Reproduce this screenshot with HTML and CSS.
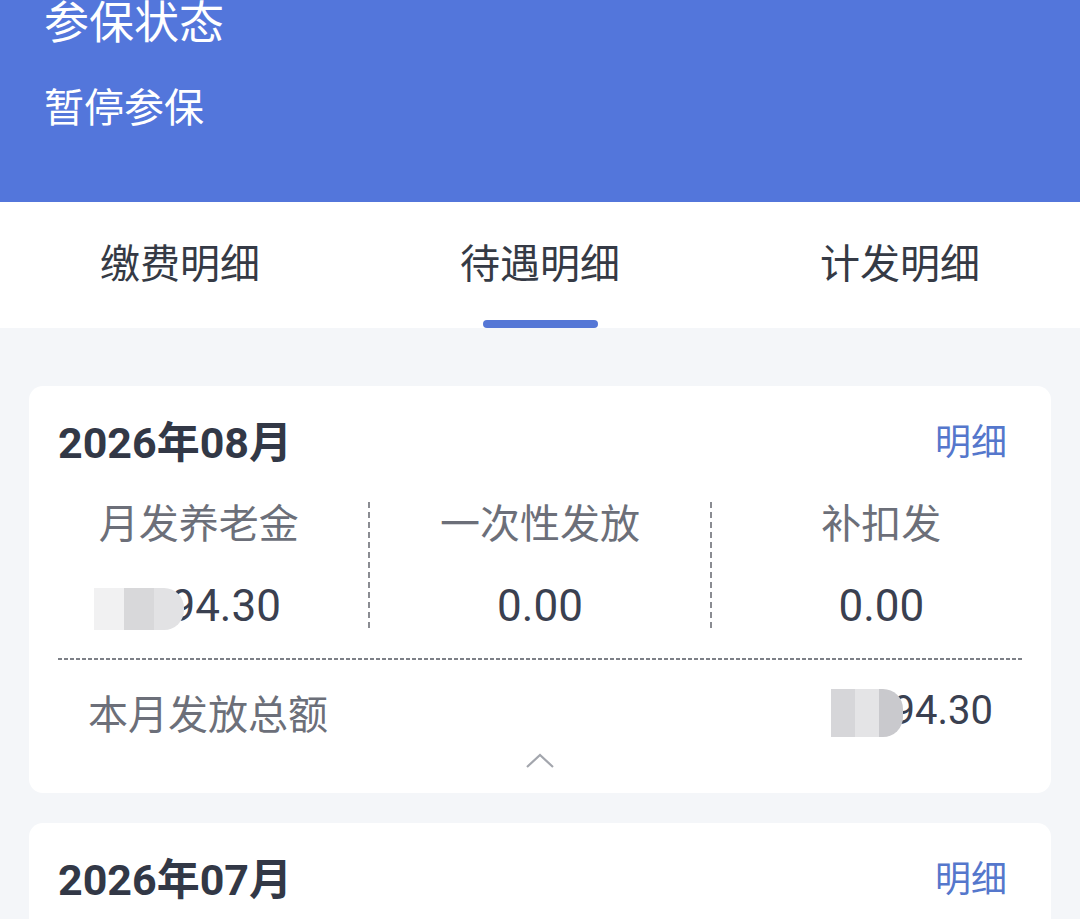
FILE: index.html
```html
<!DOCTYPE html>
<html lang="zh-CN">
<head>
    <meta charset="UTF-8">
    <meta name="viewport" content="width=device-width, initial-scale=1.0">
    <title>待遇明细</title>
    <link rel="stylesheet" href="styles.css">
</head>
<body>
    <div class="header">
        <div class="header-title">参保状态</div>
        <div class="header-status">暂停参保</div>
    </div>

    <div class="tabs">
        <div class="tab">缴费明细</div>
        <div class="tab active">待遇明细</div>
        <div class="tab">计发明细</div>
    </div>

    <div class="list">
        <div class="card">
            <div class="card-head">
                <span class="month">2026年08月</span>
                <a class="more">明细</a>
            </div>
            <div class="cols">
                <div class="col">
                    <div class="label">月发养老金</div>
                    <div class="value"><span class="mosaic m1"><i></i><i></i><i></i></span>94.30</div>
                </div>
                <div class="col">
                    <div class="label">一次性发放</div>
                    <div class="value">0.00</div>
                </div>
                <div class="col">
                    <div class="label">补扣发</div>
                    <div class="value">0.00</div>
                </div>
            </div>
            <div class="dash"></div>
            <div class="total">
                <span class="total-label">本月发放总额</span>
                <span class="total-value"><span class="mosaic m2"><i></i><i></i><i></i></span>94.30</span>
            </div>
            <div class="toggle">
                <svg width="30" height="18" viewBox="0 0 30 18"><polyline points="2,16 15,4 28,16" fill="none" stroke="#a3a6ad" stroke-width="2.2"/></svg>
            </div>
        </div>

        <div class="card card-last">
            <div class="card-head">
                <span class="month">2026年07月</span>
                <a class="more">明细</a>
            </div>
        </div>
    </div>
</body>
</html>
```

FILE: styles.css
```css
body {
    margin: 0;
    font-family: Roboto, "Noto Sans CJK SC", sans-serif;
    background-color: #f4f6f9;
    width: 1080px;
    height: 919px;
    overflow: hidden;
}
.header {
    display: flow-root;
    background-color: #5376db;
    color: #ffffff;
    height: 202px;
    padding: 0 44px;
    box-sizing: border-box;
}
.header-title {
    font-size: 45px;
    line-height: 56px;
    margin-top: -4px;
}
.header-status {
    font-size: 40px;
    line-height: 50px;
    margin-top: 32px;
}
.tabs {
    display: flex;
    background-color: #ffffff;
    height: 126px;
}
.tab {
    flex: 1;
    text-align: center;
    font-size: 40px;
    line-height: 50px;
    padding-top: 38px;
    color: #353a45;
    position: relative;
}
.tab.active::after {
    content: "";
    position: absolute;
    left: 50%;
    bottom: 0;
    width: 115px;
    height: 8px;
    margin-left: -57px;
    background-color: #5577d6;
    border-radius: 4px;
}
.list {
    padding: 58px 29px 0 29px;
    display: flex;
    flex-direction: column;
    gap: 30px;
}
.card {
    background-color: #ffffff;
    border-radius: 14px;
}
.card-last {
    height: 120px;
}
.card-head {
    display: flex;
    justify-content: space-between;
    align-items: center;
    padding: 27px 44px 0 29px;
    height: 52px;
}
.month {
    font-size: 43px;
    font-weight: bold;
    color: #323846;
}
.more {
    font-size: 36px;
    color: #5577cc;
}
.cols {
    display: flex;
    margin-top: 37px;
}
.col {
    flex: 1;
    text-align: center;
    height: 126px;
}
.col + .col {
    border-left: 2px dashed #8a8c92;
}
.label {
    font-size: 40px;
    line-height: 46px;
    color: #6c6f79;
}
.value {
    font-size: 44px;
    line-height: 56px;
    margin-top: 30px;
    color: #3a4050;
}
.mosaic {
    display: inline-flex;
    vertical-align: middle;
    position: relative;
    z-index: 1;
}
.mosaic i {
    display: block;
    width: 30px;
    height: 42px;
}
.m1 {
    margin-right: -14px;
    margin-left: -22px;
}
.m1 i:nth-child(1) { background-color: #f1f1f2; }
.m1 i:nth-child(2) { background-color: #d8d8da; }
.m1 i:nth-child(3) { background-color: #e2e2e4; border-radius: 0 20px 20px 0; }
.m2 {
    margin-right: -10px;
}
.m2 i {
    width: 24px;
    height: 48px;
}
.m2 i:nth-child(1) { background-color: #d6d6d9; }
.m2 i:nth-child(2) { background-color: #e4e4e6; }
.m2 i:nth-child(3) { background-color: #c9c9cd; border-radius: 0 20px 20px 0; }
.dash {
    margin: 30px 29px 0 29px;
    height: 2px;
    background-image: repeating-linear-gradient(to right, #7d8087 0 4px, transparent 4px 6px);
}
.total {
    display: flex;
    justify-content: space-between;
    align-items: center;
    padding: 0 58px 0 59px;
    height: 50px;
    margin-top: 27px;
}
.total-label {
    font-size: 40px;
    color: #6c6f79;
}
.total-value {
    font-size: 40px;
    color: #3a4050;
}
.toggle {
    text-align: center;
    height: 56px;
    padding-top: 14px;
    box-sizing: border-box;
}
```
